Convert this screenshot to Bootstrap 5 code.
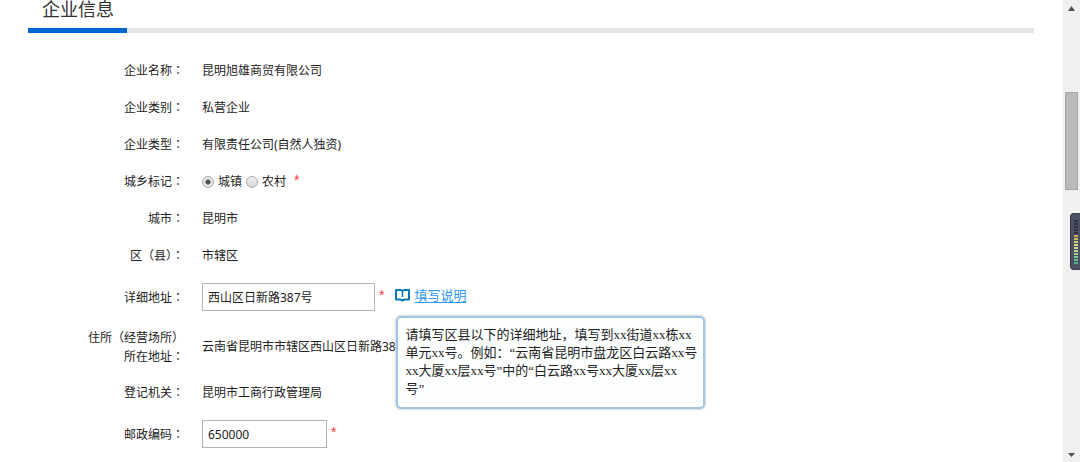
<!DOCTYPE html>
<html lang="zh-CN">
<head>
<meta charset="utf-8">
<meta name="viewport" content="width=device-width, initial-scale=1">
<title>企业信息</title>
<link href="https://cdn.jsdelivr.net/npm/bootstrap@5.3.0/dist/css/bootstrap.min.css" rel="stylesheet">
<style>
  body { font: 12px/18px "Noto Sans", "Noto Sans CJK SC", sans-serif; color: #222; background: #fff; }
  .page { height: 100vh; overflow: hidden; }
  .content-pane { min-width: 0; padding: 0 29px 0 28px; }
  .section-title { font-size: 18px; line-height: 18px; margin: 0; padding-left: 14px; font-weight: 400; color: #333; }
  .title-rule { height: 5px; background: #e4e4e4; margin: 10px 0 19px; }
  .title-rule div { width: 99px; height: 5px; background: #0067d0; }
  .info-row { min-height: 37px; gap: 18px; }
  .field-row { min-height: 46px; }
  .double-row { min-height: 54px; }
  .info-label { width: 156px; flex: none; text-align: right; }
  .colon { font-family: "Noto Sans CJK TC", sans-serif; }
  .text-field { height: 28px; border: 1px solid #b4b4b4; border-radius: 0; padding: 0 5px; font: inherit; color: #222; background: #fff; }
  .address-field { width: 173px; }
  .postcode-field { width: 125px; }
  .star { color: #f33; font: 14px/18px "Liberation Sans", sans-serif; padding-bottom: 4px; }
  .choice { width: 12px; height: 12px; appearance: none; border: 1px solid #aaa; border-radius: 50%; background: linear-gradient(#eee, #d8d8d8); margin: 0 4px 0 0; flex: none; }
  .choice:checked { background: radial-gradient(circle, #505050 0 2px, #e4e4e4 3px); }
  .help-link { font-size: 13px; color: #2a98f4; text-underline-offset: 2px; }
  .help { margin: 0 0 4px 3px; gap: 4px; }
  .help-tip { position: absolute; z-index: 2; left: 1px; top: 30px; width: 309px; height: 93px; padding: 8px 7px; border: 2px solid #a0c6e3; border-radius: 5px; background: #fcfffe; box-shadow: 0 0 3px #a8b4bc; font: 13px/18px "Liberation Serif", "Noto Sans CJK SC", serif; white-space: nowrap; color: #222; }
  .scroll-rail { width: 17px; flex: none; background: #f0f0f0; }
  .scroll-thumb { width: 13px; height: 98px; margin: 76px 0 auto 2px; background: #bababa; border: 1px solid #a6a6a6; }
  .meter { position: fixed; right: 0; top: 213px; width: 10px; height: 57px; background: #4b5062; border: 1px solid #3c3f4b; border-right: 0; border-radius: 4px 0 0 4px; padding: 6px 2px 0 3px; z-index: 3; }
  .meter svg { display: block; }
</style>
</head>
<body>
<div class="page d-flex">
  <main class="content-pane flex-grow-1">
    <h1 class="section-title">企业信息</h1>
    <div class="title-rule"><div></div></div>
    <form>
      <div class="info-row d-flex align-items-center"><div class="info-label">企业名称<span class="colon" lang="zh-TW">：</span></div><div>昆明旭雄商贸有限公司</div></div>
      <div class="info-row d-flex align-items-center"><div class="info-label">企业类别<span class="colon" lang="zh-TW">：</span></div><div>私营企业</div></div>
      <div class="info-row d-flex align-items-center"><div class="info-label">企业类型<span class="colon" lang="zh-TW">：</span></div><div>有限责任公司(自然人独资)</div></div>
      <div class="info-row d-flex align-items-center" role="radiogroup" aria-labelledby="area-label">
        <div class="info-label" id="area-label">城乡标记<span class="colon" lang="zh-TW">：</span></div>
        <div class="d-flex align-items-center">
          <label class="d-flex align-items-center me-1"><input class="choice" type="radio" name="area" checked>城镇</label>
          <label class="d-flex align-items-center me-2"><input class="choice" type="radio" name="area">农村</label>
          <span class="star">*</span>
        </div>
      </div>
      <div class="info-row d-flex align-items-center"><div class="info-label">城市<span class="colon" lang="zh-TW">：</span></div><div>昆明市</div></div>
      <div class="info-row d-flex align-items-center"><div class="info-label">区<span class="colon" lang="zh-TW">（</span>县<span class="colon" lang="zh-TW">）：</span></div><div>市辖区</div></div>
      <div class="info-row field-row d-flex align-items-center">
        <label class="info-label" for="address">详细地址<span class="colon" lang="zh-TW">：</span></label>
        <div class="d-flex align-items-center">
          <input class="text-field address-field" id="address" type="text" value="西山区日新路387号">
          <span class="star ms-1 pe-2">*</span>
          <div class="help position-relative d-flex align-items-center">
            <svg width="15" height="14" viewBox="0 0 15 14" fill="none" stroke="#0878b8" stroke-width="2" aria-hidden="true"><path d="M1 2H6L7.500 3L9 2H14V11.500H9.500L7.500 12.500L5.500 11.500H1Z" stroke-linejoin="round"/><path d="M7.500 3V9" stroke-width="1.500"/></svg>
            <a class="help-link" href="#" aria-describedby="address-tip">填写说明</a>
            <div class="help-tip" id="address-tip" role="tooltip">请填写区县以下的详细地址，填写到xx街道xx栋xx<br>单元xx号。例如：“云南省昆明市盘龙区白云路xx号<br>xx大厦xx层xx号”中的“白云路xx号xx大厦xx层xx<br>号”</div>
          </div>
        </div>
      </div>
      <div class="info-row double-row d-flex align-items-center"><div class="info-label">住所<span class="colon" lang="zh-TW">（</span>经营场所<span class="colon" lang="zh-TW">）</span><br>所在地址<span class="colon" lang="zh-TW">：</span></div><div>云南省昆明市市辖区西山区日新路387号</div></div>
      <div class="info-row d-flex align-items-center"><div class="info-label">登记机关<span class="colon" lang="zh-TW">：</span></div><div>昆明市工商行政管理局</div></div>
      <div class="info-row field-row d-flex align-items-center">
        <label class="info-label" for="postcode">邮政编码<span class="colon" lang="zh-TW">：</span></label>
        <div class="d-flex align-items-center">
          <input class="text-field postcode-field" id="postcode" type="text" value="650000">
          <span class="star ms-1">*</span>
        </div>
      </div>
    </form>
  </main>
  <div class="scroll-rail d-flex flex-column" aria-hidden="true">
    <svg width="17" height="16" viewBox="0 0 17 16"><path d="M5 11L8.500 6L12 11Z" fill="#505050"/></svg>
    <div class="scroll-thumb"></div>
    <svg width="17" height="16" viewBox="0 0 17 16"><path d="M5 7L8.500 11L12 7Z" fill="#505050"/></svg>
  </div>
</div>
<div class="meter" aria-hidden="true">
  <svg width="4" height="44" viewBox="0 0 4 44">
    <defs><pattern id="ticks" width="4" height="3" patternUnits="userSpaceOnUse"><rect width="4" height="2" fill="#fff"/></pattern><mask id="tick-mask"><rect width="4" height="44" fill="url(#ticks)"/></mask>
    <linearGradient id="level" x2="0" y2="1"><stop stop-color="#d0ac4c"/><stop offset=".4" stop-color="#d8dc88"/><stop offset=".7" stop-color="#8cd090"/><stop offset="1" stop-color="#48a898"/></linearGradient></defs>
    <g mask="url(#tick-mask)"><rect width="4" height="15" fill="#30333e"/><rect y="15" width="4" height="29" fill="url(#level)"/></g>
  </svg>
</div>
<script src="https://cdn.jsdelivr.net/npm/bootstrap@5.3.0/dist/js/bootstrap.bundle.min.js"></script>
</body>
</html>
